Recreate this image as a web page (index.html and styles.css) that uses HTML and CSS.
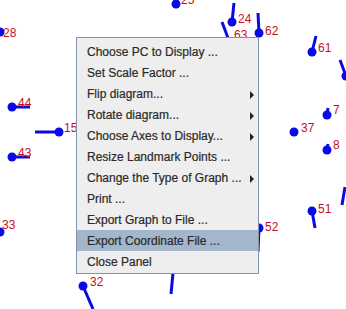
FILE: index.html
```html
<!DOCTYPE html>
<html>
<head>
<meta charset="utf-8">
<link rel="stylesheet" href="styles.css">
</head>
<body>
<div class="panel">
  <svg class="plot" width="346" height="309" viewBox="0 0 346 309">
    <g class="seg">
      <line x1="232" y1="22" x2="234" y2="3"/>
      <line x1="222" y1="22" x2="228" y2="38"/>
      <line x1="259" y1="33" x2="258" y2="13"/>
      <line x1="312" y1="52" x2="316" y2="36"/>
      <line x1="340" y1="60" x2="346" y2="76"/>
      <line x1="327" y1="115" x2="328" y2="108"/>
      <line x1="327" y1="150" x2="328" y2="144"/>
      <line x1="345" y1="187" x2="342" y2="205"/>
      <line x1="312" y1="211" x2="315" y2="228"/>
      <line x1="259" y1="228" x2="258" y2="252"/>
      <line x1="173" y1="273" x2="171" y2="294"/>
      <line x1="83" y1="286" x2="93" y2="309"/>
      <line x1="12" y1="107" x2="30" y2="107"/>
      <line x1="59" y1="132" x2="35" y2="132"/>
      <line x1="12" y1="157" x2="30" y2="157"/>
    </g>
    <g class="dot">
      <circle cx="0" cy="32" r="4.5"/>
      <circle cx="176" cy="4" r="4.5"/>
      <circle cx="232" cy="22" r="4.5"/>
      <circle cx="259" cy="33" r="4.5"/>
      <circle cx="312" cy="52" r="4.5"/>
      <circle cx="346" cy="76" r="4.5"/>
      <circle cx="327" cy="115" r="4.5"/>
      <circle cx="294" cy="132" r="4.5"/>
      <circle cx="327" cy="150" r="4.5"/>
      <circle cx="312" cy="211" r="4.5"/>
      <circle cx="259" cy="228" r="4.5"/>
      <circle cx="83" cy="286" r="4.5"/>
      <circle cx="0" cy="232" r="4.5"/>
      <circle cx="12" cy="107" r="4.5"/>
      <circle cx="59" cy="132" r="4.5"/>
      <circle cx="12" cy="157" r="4.5"/>
    </g>
    <g class="lbl">
      <text x="3" y="37">28</text>
      <text x="181" y="4">25</text>
      <text x="238" y="23">24</text>
      <text x="234" y="39">63</text>
      <text x="265" y="35">62</text>
      <text x="318" y="52">61</text>
      <text x="333" y="114">7</text>
      <text x="301" y="132">37</text>
      <text x="333" y="149">8</text>
      <text x="318" y="213">51</text>
      <text x="265" y="231">52</text>
      <text x="18" y="107">44</text>
      <text x="64" y="132">15</text>
      <text x="18" y="157">43</text>
      <text x="2" y="229">33</text>
      <text x="90" y="286">32</text>
    </g>
  </svg>

  <ul class="menu">
    <li class="item">Choose PC to Display ...</li>
    <li class="item">Set Scale Factor ...</li>
    <li class="item sub">Flip diagram...</li>
    <li class="item sub">Rotate diagram...</li>
    <li class="item sub">Choose Axes to Display...</li>
    <li class="item">Resize Landmark Points ...</li>
    <li class="item sub">Change the Type of Graph ...</li>
    <li class="item">Print ...</li>
    <li class="item">Export Graph to File ...</li>
    <li class="item active">Export Coordinate File ...</li>
    <li class="item">Close Panel</li>
  </ul>
</div>
</body>
</html>
```

FILE: styles.css
```css
html, body {
  margin: 0;
  padding: 0;
  background: #ffffff;
}

.panel {
  position: relative;
  width: 346px;
  height: 309px;
  overflow: hidden;
  background: #ffffff;
}

.plot {
  display: block;
}

.seg line {
  stroke: #0a0ae6;
  stroke-width: 3;
  stroke-linecap: butt;
}

.dot circle {
  fill: #0a0ae6;
}

.lbl text {
  font-family: "Liberation Sans", Arial, sans-serif;
  font-size: 12px;
  fill: #c4101a;
}

.menu {
  position: absolute;
  left: 76px;
  top: 37px;
  width: 181px;
  margin: 0;
  padding: 3px 0 1px;
  list-style: none;
  background: #eeeeee;
  border: 1px solid #8593ae;
  font-family: "Liberation Sans", Arial, sans-serif;
  font-size: 12px;
  color: #2a2a2a;
}

.item {
  position: relative;
  height: 20px;
  padding-top: 1px;
  line-height: 21px;
  padding-left: 10px;
  white-space: nowrap;
  -webkit-text-stroke: 0.2px #2a2a2a;
}

.item.active {
  background: #a3b6cb;
}

.item.sub::after {
  content: "";
  position: absolute;
  left: 173px;
  top: 8px;
  width: 0;
  height: 0;
  border-top: 4px solid transparent;
  border-bottom: 4px solid transparent;
  border-left: 4px solid #222222;
}
```
